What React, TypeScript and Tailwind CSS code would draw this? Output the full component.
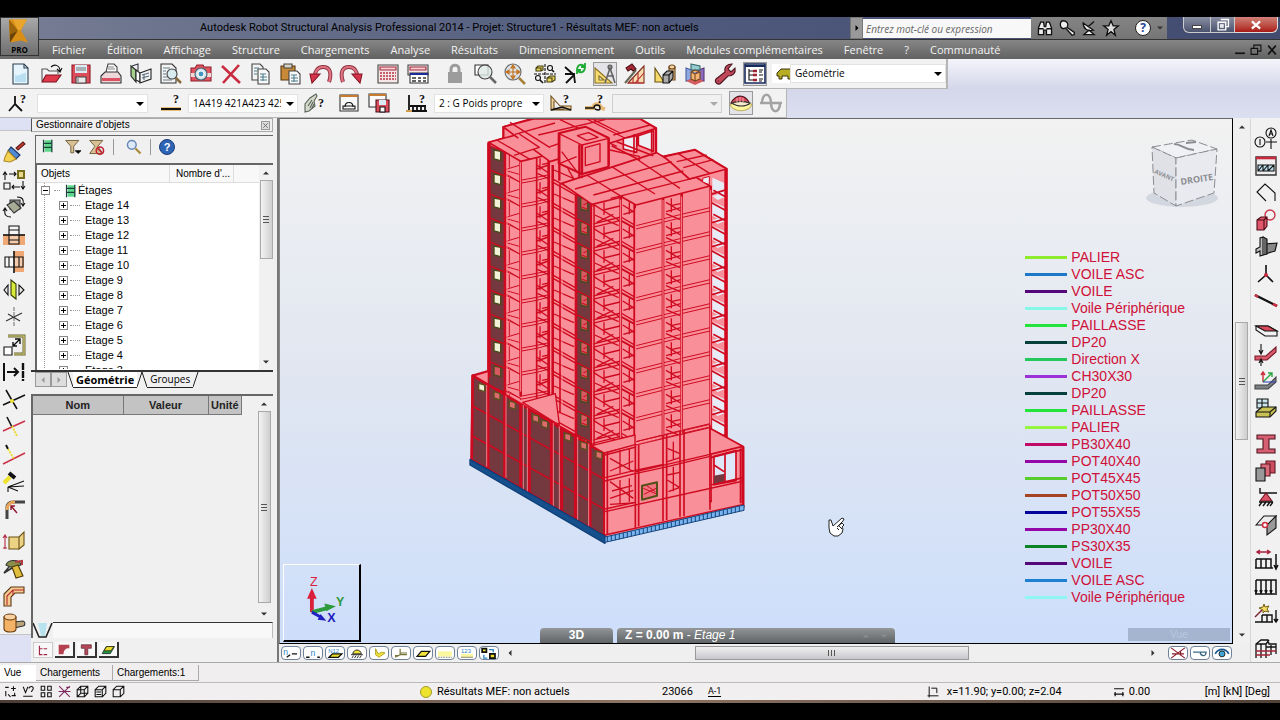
import type { ReactNode } from 'react';

type Tool = { label: string; art: ReactNode; on?: boolean };

const Ic = ({ children, size = 'h-[22px] w-[22px]' }: { children: ReactNode; size?: string }) => (
  <svg viewBox="0 0 22 22" className={`${size} block shrink-0 overflow-visible`} fill="none" stroke="#111" strokeWidth="1.1">
    {children}
  </svg>
);

const ToolButton = ({ tool }: { tool: Tool }) => (
  <button
    aria-label={tool.label}
    title={tool.label}
    className={tool.on ? 'bg-[#e4e4e8] outline outline-[#9a9a9a]' : ''}
  >
    <Ic>{tool.art}</Ic>
  </button>
);

const question = (
  <text x="13" y="11" fontSize="12" fontWeight="700" fontFamily="Liberation Serif, serif" fill="#111" stroke="none">
    ?
  </text>
);

const fileTools: Tool[] = [
  {
    label: 'Nouveau',
    art: <><path d="M3 1h11l4 4v16H3z" fill="#e6f5fd" stroke="#2c4050" /><path d="M5 12c5 2 8-3 11-2v9H5z" fill="#b9dff3" stroke="none" /><path d="M14 1v4h4" stroke="#2c4050" /></>,
  },
  {
    label: 'Ouvrir',
    art: (
      <>
        <path d="M2 18V6h5l2 2h9v3" fill="#f4f4f4" stroke="#555" />
        <path d="M2 19l4-7h15l-5 7z" fill="#e03a4a" stroke="#7a1220" />
        <path d="M11 4c4-4 9-1 9 4m-3-2l3 3 2-4" />
      </>
    ),
  },
  {
    label: 'Enregistrer',
    art: (
      <>
        <path d="M2 2h18v18H2z" fill="#dd4c5b" stroke="#8c1826" />
        <path d="M5 2h12v8H5z" fill="#d9ecf4" stroke="none" />
        <path d="M6 14h10v6H6z" fill="#e9e9e9" stroke="#444" />
        <path d="M8 15v4M6 5h10M6 7h10" stroke="#777" />
      </>
    ),
  },
  {
    label: 'Imprimer',
    art: (
      <>
        <path d="M6 9l2-8h6l3 3v6" fill="#fff" stroke="#444" />
        <path d="M1 13l4-4h13l3 4v7H1z" fill="#ecd8da" stroke="#333" />
        <path d="M2 15h18v3H2z" fill="#dc5060" stroke="none" />
        <path d="M8 4h6M8 6h7" stroke="#888" />
      </>
    ),
  },
  {
    label: 'Composer la note',
    art: (
      <>
        <path d="M1 3l5 4v12L1 13z" fill="#a4cf8c" stroke="#222" />
        <path d="M6 7l4 3v9l-4-2z" fill="#fff" stroke="#222" />
        <path d="M10 10l11-4v10l-11 4z" fill="#f1f3f4" stroke="#222" />
        <path d="M12 12l7-2m-7 5l7-2M14 11v6" stroke="#567" />
        <path d="M2 3l6-2v7" stroke="#334" />
      </>
    ),
  },
  {
    label: 'Aperçu avant impression',
    art: (
      <>
        <path d="M1 1h11l4 4v15H1z" fill="#f3f3f3" stroke="#333" />
        <path d="M3 5h7M3 8h3M3 11h3M3 14h5M3 17h9" stroke="#68808c" />
        <circle cx="12" cy="11" r="5" fill="#d8ecef" stroke="#444" />
        <path d="M16 15l5 5" stroke="#8b6b3c" strokeWidth="2.5" />
      </>
    ),
  },
  {
    label: 'Capture d’écran',
    art: (
      <>
        <path d="M1 5h4l2-3h6l1 2h7v14H1z" fill="#e25460" stroke="#8f1f2d" />
        <path d="M1 10h20v4H1z" fill="#efd9da" stroke="none" />
        <circle cx="11" cy="11" r="6" fill="#cfe2ea" stroke="#47606e" />
        <circle cx="11" cy="11" r="3" fill="#4494bd" stroke="#fff" />
      </>
    ),
  },
  { label: 'Supprimer', art: <path d="M2 3l18 17M19 2L3 20" stroke="#c92c40" strokeWidth="2.6" /> },
  {
    label: 'Copier',
    art: (
      <>
        <path d="M2 1h8l3 3v13H2z" fill="#f4f4f4" stroke="#444" />
        <path d="M8 6h8l3 3v12H8z" fill="#f8f8f8" stroke="#444" />
        <path d="M4 5h5M4 8h3M4 11h3M10 11h6M10 14h7M10 17h7M13 11v7" stroke="#4d7d8b" />
      </>
    ),
  },
  {
    label: 'Coller',
    art: (
      <>
        <path d="M1 3h14v14H1z" fill="#c88a38" stroke="#573a12" />
        <path d="M4 1h8v4H4z" fill="#d9d3c5" stroke="#444" />
        <path d="M9 8h8l3 3v10H9z" fill="#f8f8f8" stroke="#444" />
        <path d="M11 12h6M11 15h7M11 18h7M14 12v7" stroke="#4d7d8b" />
      </>
    ),
  },
  {
    label: 'Annuler',
    art: (
      <>
        <path d="M19 19c3-9 1-15-6-15-5 0-8 4-8 9" stroke="#8c3441" strokeWidth="4" />
        <path d="M19 19c3-9 1-15-6-15-5 0-8 4-8 9" stroke="#e07484" strokeWidth="2.2" />
        <path d="M0 11h10l-8 9z" fill="#d8334a" stroke="#861426" />
      </>
    ),
  },
  {
    label: 'Rétablir',
    art: (
      <>
        <path d="M3 19C0 10 2 4 9 4c5 0 8 4 8 9" stroke="#8c3441" strokeWidth="4" />
        <path d="M3 19C0 10 2 4 9 4c5 0 8 4 8 9" stroke="#e07484" strokeWidth="2.2" />
        <path d="M22 11H12l8 9z" fill="#d8334a" stroke="#861426" />
      </>
    ),
  },
];

const calcTools: Tool[] = [
  {
    label: 'Calculer',
    art: (
      <>
        <path d="M1 2h20v18H1z" fill="#f7e6e7" stroke="#444" />
        <path d="M3 4h16v3H3z" fill="#f7cfd2" stroke="#a12b3c" />
        <path d="M3 10h16M3 13h16M3 16h16" stroke="#c4606a" strokeWidth="1.8" strokeDasharray="2 1" />
      </>
    ),
  },
  {
    label: 'Tableaux',
    art: (
      <>
        <path d="M1 2h20v10H1z" fill="#f7e6e7" stroke="#444" />
        <path d="M3 4h16v3H3z" fill="#f7cfd2" stroke="#a12b3c" />
        <path d="M3 10h18v10H3z" fill="#fff" stroke="#333" />
        <path d="M3 11h18" stroke="#1c2c9a" strokeWidth="2" />
        <path d="M5 15h4M11 15h3M16 15h3M5 18h4M11 18h3M16 18h3" stroke="#333" strokeWidth="1.3" />
      </>
    ),
  },
];

const viewTools: Tool[] = [
  {
    label: 'Verrouiller',
    art: (
      <>
        <path d="M7 10V6c0-5 8-5 8 0v4" stroke="#9c9c9c" strokeWidth="3" />
        <path d="M4 9h14v11H4z" fill="#9c9c9c" stroke="none" />
      </>
    ),
  },
  {
    label: 'Zoom fenêtre',
    art: (
      <>
        <path d="M1 2h13v10H1z" fill="#fff" stroke="#333" />
        <circle cx="11" cy="9" r="7" fill="#dfe8e6" fillOpacity=".8" stroke="#444" />
        <path d="M16 14l6 6" stroke="#666" strokeWidth="2.5" />
      </>
    ),
  },
  {
    label: 'Zoom étendu',
    art: (
      <>
        <circle cx="9" cy="9" r="8" fill="#dbe3e6" stroke="#666" />
        <path d="M15 15l6 6" stroke="#a78137" strokeWidth="2.5" />
        <path d="M9 2v14M2 9h14M9 2l-2 3h4zM9 16l-2-3h4zM2 9l3-2v4zM16 9l-3-2v4z" stroke="#c4701c" />
      </>
    ),
  },
  {
    label: 'Affichage',
    art: (
      <>
        <path d="M0 11h22M11 1v20" strokeDasharray="3 1" />
        <path d="M2 8V5l2-2h5v4L7 8zM2 5h5v3M13 19v-4l3-2h5v4l-3 2zM13 15h5v4" fill="#e8d35c" stroke="#3f3b12" />
        <circle cx="16" cy="5" r="2.5" />
        <circle cx="4" cy="15" r="2.5" />
        <path d="M18 7l2 2M6 17l3 3" strokeWidth="1.6" />
      </>
    ),
  },
  {
    label: 'Redessiner',
    art: (
      <>
        <path d="M1 4l9 8v0M10 12l-8 8M10 12l1 8M1 11h10" strokeWidth="1.8" />
        <path d="M13 6c1-5 5-5 7-3m1 2c-1 5-5 5-7 3M21 0v4h-4M13 11V7h4" stroke="#1eaa35" strokeWidth="1.8" />
      </>
    ),
  },
  {
    label: 'Mode graphique',
    on: true,
    art: (
      <>
        <path d="M1 5v15h17zM5 13v4h5z" fill="#f7dc74" fillRule="evenodd" stroke="#8a7020" />
        <path d="M16 5l-5 15M16 5l5 15M13 13h7" stroke="#666" strokeWidth="1.6" />
        <circle cx="16" cy="4" r="2" fill="#888" stroke="#555" />
      </>
    ),
  },
  {
    label: 'Calcul de structure',
    art: (
      <>
        <path d="M4 20L20 3v17z" fill="#f8dcae" stroke="#7e3020" />
        <path d="M9 15v5M14 10v10M4 20h16M20 10l-9 10" stroke="#b9252e" />
        <path d="M1 20L12 7" stroke="#665" strokeWidth="2" />
        <path d="M2 5l6-4 4 5-3 2-2-2-3 2z" fill="#a82a36" stroke="#501018" />
      </>
    ),
  },
  {
    label: 'Sections',
    art: (
      <>
        <path d="M1 5v14h9z" fill="#f6da6c" stroke="#665010" />
        <path d="M15 4h6v13h-6z" fill="#ecc48c" stroke="#694318" />
        <ellipse cx="18" cy="4" rx="3" ry="2" fill="#f7d9a5" stroke="#694318" />
        <path d="M9 12l4-4h6v7l-4 5H9zM9 12h6v8m0-8l4-4" fill="#aaa" />
      </>
    ),
  },
  {
    label: 'Vue 3D',
    art: (
      <>
        <path d="M2 5l8 3v8l-8 2z" fill="#8fa8e0" stroke="#4a60a0" />
        <path d="M20 5l-8 3v8l8 2z" fill="#8d6cba" stroke="#553a80" />
        <path d="M7 1l9 2v4H7z" fill="#93cdd0" stroke="#37676a" />
        <path d="M2 18l9-4 9 4-9 4z" fill="#d45d60" stroke="none" />
        <path d="M7 9l4-2 5 2v7l-5 2-4-2zM7 9l4 2 5-2M11 11v7" fill="#f3b474" stroke="#73451a" />
      </>
    ),
  },
  {
    label: 'Outils',
    art: (
      <path
        d="M2 16l9-7c-1-5 2-8 7-8l-4 5 3 3 4-4c1 5-2 8-7 8l-7 7c-3 3-7-1-5-4zM4 18h1"
        fill="#c2485c"
        stroke="#4d1621"
      />
    ),
  },
  {
    label: 'Gestionnaire',
    on: true,
    art: (
      <>
        <path d="M1 1h20v19H1z" fill="#fff" stroke="#172a5c" strokeWidth="1.6" />
        <path d="M1 3h20" stroke="#172a5c" strokeWidth="2" />
        <path d="M5 6v11h4M5 8h4M5 12h4" />
        <path d="M9 8h4M9 12h4M9 17h4" stroke="#9e2330" strokeWidth="2.6" />
        <path d="M15 7h4M15 9h3M15 12h4M15 16h4M15 18h3" />
      </>
    ),
  },
];

const node: Tool = { label: 'Noeuds', art: <><path d="M8 4v8M8 12l7 7M8 12l-6 7" strokeWidth="1.8" />{question}</> };
const bar: Tool = {
  label: 'Barres',
  art: <><path d="M1 17h20" stroke="#e9c078" strokeWidth="4" /><path d="M1 17h20" strokeWidth="2" />{question}</>,
};
const pick: Tool = {
  label: 'Sélection spéciale',
  art: (
    <>
      <path d="M1 20V12l5-6 3-2 3-2 1 2-3 5 1 5-6 5z" fill="#d5dacc" stroke="#59635a" />
      <path d="M4 14l4-6M6 16l3-6M8 16l2-4" stroke="#59635a" />
      <text x="14" y="15" fontSize="12" fontWeight="700" fontFamily="Liberation Serif, serif" fill="#111" stroke="none">?</text>
    </>
  ),
};
const caseTools: Tool[] = [
  {
    label: 'Mode de sélection',
    art: (
      <>
        <path d="M2 3h18v16H2z" fill="#fafafa" stroke="#333" />
        <path d="M2 4h18" stroke="#c67b31" strokeWidth="2" />
        <path d="M7 15c0-6 8-6 8 0M5 17v-3h12v3z" />
      </>
    ),
  },
  {
    label: 'Enregistrer la sélection',
    art: (
      <>
        <path d="M1 2h17v13H1z" fill="#fafafa" stroke="#333" />
        <path d="M1 3h17" stroke="#c67b31" strokeWidth="2" />
        <path d="M8 8h13v12H8z" fill="#dd4c5b" stroke="#4e1018" />
        <path d="M11 8h7v5h-7z" fill="#d9ecf4" stroke="none" />
        <path d="M12 15h5v5h-5z" fill="#fff" />
      </>
    ),
  },
];
const caseTool: Tool = {
  label: 'Cas de charge',
  art: <><path d="M3 3v16M3 19h18M7 14v5M11 14v5M15 14v5M19 14v5M4 14h16" strokeWidth="1.8" /><path d="M0 19h6" stroke="#d09a46" strokeWidth="2" />{question}</>,
};
const modeTool: Tool = {
  label: 'Diagrammes',
  art: <><path d="M1 4l9 10h11v4H1zM4 9v8h10" fill="#ecd09a" stroke="#725021" /><path d="M1 18l11-3 9 3" strokeWidth="1.6" />{question}</>,
};
const defTool: Tool = {
  label: 'Déformée',
  art: <><path d="M1 16h8c0-5 8-5 8 0l4 1" stroke="#e6bc78" strokeWidth="4" /><path d="M1 16h9c0-4 6-4 6 0 0 3-3 2-5 1" strokeWidth="1.4" />{question}</>,
};
const resultTools: Tool[] = [
  {
    label: 'Cartographies',
    on: true,
    art: (
      <>
        <path d="M0 12c2 9 20 9 22 0z" fill="#fff7a0" stroke="#bdb35c" />
        <path d="M1 11c5-9 13-9 18-1l-8 3z" fill="#dc4a5c" stroke="#501820" />
        <path d="M2 11c5-2 12-2 18 0-4 4-13 4-18 0z" fill="#f6eccb" stroke="#333" />
        <path d="M7 6v4M10 5v5M13 6v4" stroke="#f3a0a8" />
      </>
    ),
  },
  {
    label: 'Analyse modale',
    art: <path d="M0 11h22M2 11c0-11 9-11 9 0s9 11 9 0" stroke="#a3a3a3" strokeWidth="2.5" />,
  },
];

const leftTools: Tool[] = [
  {
    label: 'Attributs',
    art: (
      <>
        <path d="M20 1l-7 6 2 2 7-6z" fill="#cb3b32" stroke="#602018" />
        <path d="M8 6l9 8-4 4-8-8z" fill="#4f8ad4" stroke="#1b3260" />
        <path d="M5 10l8 8-6 3-6-1 1-4z" fill="#f5d352" stroke="#b08c28" />
      </>
    ),
  },
  {
    label: 'Translation',
    art: (
      <>
        <path d="M15 2h6v7h-6z" fill="#e6dc8b" stroke="#776d20" strokeWidth="2" />
        <path d="M1 14h6v6H1zM2 11V4M0 6l2-3 2 3M6 5h7M11 3l2 2-2 2M20 12v7M18 17l2 3 2-3M17 18H9M11 16l-2 2 2 2" />
      </>
    ),
  },
  {
    label: 'Rotation',
    art: (
      <>
        <path d="M7 4h10v9H7z" fill="#888" stroke="#333" />
        <path d="M4 9l7-4 7 7-7 5z" fill="#a5ab94" stroke="#333" />
        <path d="M14 1c6 0 7 3 6 8m-2-2l2 3 2-3M8 21c-5 0-7-2-6-8m-2 2l2-3 2 3" />
      </>
    ),
  },
  {
    label: 'Symétrie horizontale',
    art: <><path d="M0 11h22v10H0z" fill="#f0a974" stroke="none" /><path d="M6 2h10v18H6zM6 6h10M6 16h10" fill="#fff" fillOpacity=".4" /><path d="M0 11h22" strokeWidth="1.6" /></>,
  },
  {
    label: 'Symétrie verticale',
    art: <><path d="M11 0h10v21H11z" fill="#f0a974" stroke="none" /><path d="M2 6h18v10H2zM6 6v10M16 6v10" fill="#fff" fillOpacity=".4" /><path d="M11 0v22" strokeWidth="1.6" /></>,
  },
  {
    label: 'Symétrie plan',
    art: <><path d="M8 1l5 4v15l-5-4z" fill="#d7ea38" stroke="#33380a" /><path d="M5 6l-4 5 4 5zM16 6v10l5-5z" fill="#e9e9e9" /></>,
  },
  { label: 'Symétrie axiale', art: <><path d="M11 1v20" stroke="#777" strokeDasharray="4 1" /><path d="M3 15L19 7M5 8l12 7" stroke="#333" /></> },
  {
    label: 'Échelle',
    art: <><path d="M5 2h16v18H11" stroke="#6f6a33" strokeWidth="3" /><path d="M5 2h16v18H11" stroke="#dcd386" /><path d="M1 13h8v8H1z" fill="#fff" /><path d="M10 12l7-7M12 5h5v5M10 8v4h4" strokeWidth="1.4" /></>,
  },
  { label: 'Décaler', art: <><path d="M1 2v18M4 11h11M11 7l4 4-4 4" strokeWidth="2" /><path d="M20 2v18" strokeWidth="2.4" strokeDasharray="7 1" /></> },
  { label: 'Intersection', art: <><path d="M3 1l11 19M0 16L22 6" strokeWidth="1.5" /><circle cx="9" cy="12" r="2" fill="#f2e738" stroke="none" /></> },
  { label: 'Couper', art: <><path d="M0 15L22 5" stroke="#cc3046" strokeWidth="1.5" /><path d="M4 1l5 10" strokeWidth="1.6" /><path d="M9 10l5 10" stroke="#eadb31" strokeWidth="2" strokeDasharray="2 1" /></> },
  { label: 'Prolonger', art: <><path d="M0 20L22 9" stroke="#cc3046" strokeWidth="1.5" /><path d="M3 1l2 4" strokeWidth="2" /><path d="M5 5l6 10" stroke="#eadb31" strokeWidth="2" strokeDasharray="2 1" /></> },
  { label: 'Diviser', art: <><path d="M1 12l6-6" stroke="#eee22a" strokeWidth="4" /><path d="M6 2l6 5" strokeWidth="4" /><path d="M5 16l16-6M5 16l16-1M5 16l10 4M5 16v5" /></> },
  { label: 'Congé', art: <><path d="M4 20V9c0-4 2-6 6-6h12" stroke="#444" strokeWidth="3" /><path d="M4 11c0-5 2-8 8-8" stroke="#e8a55c" strokeWidth="3" /><path d="M8 7l6 7M8 11V7h4" stroke="#8c1428" strokeWidth="1.4" /></> },
];

const leftObjects: Tool[] = [
  { label: 'Extruder', art: <><path d="M2 5v13M0 7l2-3 2 3M0 17h4" stroke="#b52943" /><path d="M6 6h10v12H6zM16 6l5-5v13l-5 4z" fill="#ecd283" stroke="#6b5115" /></> },
  { label: 'Révolution', art: <><path d="M3 7c2-6 14-6 15 0l-5 2H7z" fill="#8a8f4a" stroke="#333" /><path d="M9 9l4 11 7-2-5-11z" fill="#e0bd3c" stroke="#4d3a08" /><path d="M6 9l-5 6 8-5" stroke="#333" strokeWidth="1.6" /><path d="M12 4l7-1v4" stroke="#b03c42" strokeWidth="2" /></> },
  { label: 'Extrusion par polyligne', art: <><path d="M1 21V9l7-7h13v6h-9l-4 4v9z" fill="#f6cb92" stroke="#5b3814" /><path d="M4 20V11l6-6h11M10 5v5" stroke="#b52a2a" /></> },
  { label: 'Solides', art: <><path d="M11 10l9-1c3 1 2 5 0 5l-9 2z" fill="#bda67c" stroke="#333" /><path d="M1 5v12c1 4 12 4 12 0V5z" fill="#f4b267" stroke="#6a3e12" /><ellipse cx="7" cy="5" rx="6" ry="3" fill="#f9d1a0" stroke="#6a3e12" /></> },
];

const load = <path d="M1 10h15v9M1 10v9M6 10v9M11 10v9M0 19h18M21 5v14M19 16l2 4 2-4" strokeWidth="1.5" />;

const rightTools: Tool[][] = [
  [
    { label: 'Lignes de construction', art: <><circle cx="16" cy="5" r="5" /><circle cx="5" cy="14" r="5" /><path d="M16 11v10M11 14h11M14 8l2-6 2 6M15 6h3M5 11v6" /></> },
    { label: 'Niveaux', art: <><path d="M1 2h20v18H1z" fill="#eee" stroke="#333" strokeWidth="1.4" /><path d="M1 3h20" stroke="#ca2a3d" strokeWidth="2.6" /><path d="M3 10h16v6H3zM8 10v6M13 10v6M3 16l5-6M8 16l5-6M13 16l6-6" fill="#bcddeb" /></> },
    { label: 'Polyligne', art: <path d="M11 19L2 10l8-8 10 9v8" /> },
    { label: 'Objets', art: <><circle cx="15" cy="6" r="5" stroke="#cb354a" strokeWidth="1.4" /><path d="M2 11l4-3h6v9l-3 4H2zM2 11h7v10m0-10l3-3" fill="#e0566a" stroke="#4c0d17" /></> },
    { label: 'Profilés', art: <><path d="M10 8l12-1-2 8-10 3z" fill="#888" /><path d="M1 13l4-2V2l3-1v18l-3 1v-5l-4 2z" fill="#bbb" /><path d="M8 1l4 2v15l-4 1" fill="#666" /></> },
    { label: 'Noeud', art: <><path d="M11 2v10M11 12l7 7M11 12l-8 7" strokeWidth="1.6" /><circle cx="11" cy="12" r="2" fill="#c82b40" stroke="none" /></> },
    { label: 'Barre', art: <><path d="M0 5l22 11" strokeWidth="2.2" /><path d="M0 5l3 2M18 14l4 2" stroke="#cf2f42" strokeWidth="2.6" /></> },
    { label: 'Dalle', art: <><path d="M1 9h12l9 5v5H10L1 13z" fill="#f1f1f1" /><path d="M1 9h12l9 5H10z" fill="#d8485a" /></> },
    { label: 'Appui plan', art: <><path d="M0 12h11l10-9v5L12 16H0z" fill="#d85a6c" stroke="#771827" /><path d="M6 0v9M4 6l2 4 2-4M6 22v-6M4 19l2-4 2 4" /></> },
    { label: 'Repère local', art: <><path d="M0 14h13l8-8v5l-8 7H0z" fill="#7a8083" stroke="#444" /><path d="M8 11V1M6 4l2-3 2 3" stroke="#cb2e3c" strokeWidth="1.4" /><path d="M8 11l9-9M13 2h4v4" stroke="#28a540" strokeWidth="1.4" /><path d="M8 11h13" stroke="#3a45bd" /></> },
    { label: 'Maillage', art: <><path d="M2 1h11v9H2zM7 1v9M2 5h11" fill="#cbe6ed" /><path d="M1 14l6-5h14v4l-6 6H1z" fill="#c9c154" /><path d="M1 14h14l6-5M15 14v5" /></> },
  ],
  [
    { label: 'Profilé', art: <path d="M2 2h18v4h-6v10h6v4H2v-4h6V6H2z" fill="#d65e72" stroke="#4f131d" /> },
    { label: 'Matériaux', art: <><path d="M11 1h9v12h-9z" fill="#ce4c60" stroke="#5c1824" /><path d="M6 4h9v12H6z" fill="#d96878" stroke="#5c1824" /><path d="M1 8h9v13H1z" fill="#999" /></> },
    { label: 'Appuis', art: <><path d="M5 1v5h17" strokeWidth="1.4" /><path d="M11 6l6 8H5z" fill="#dd5266" stroke="#6e1523" /><path d="M4 15h14M7 15l-3 4M11 15l-3 4M15 15l-3 4M18 15l-3 4" strokeWidth="1.4" /></> },
    { label: 'Relâchements', art: <><path d="M1 11l8-9h12l-8 9z" fill="#ececec" /><path d="M21 2v12l-9 7V11z" fill="#999" /><circle cx="10" cy="11" r="2.5" fill="#fff" stroke="#cf2f42" strokeWidth="1.6" /></> },
  ],
  [
    { label: 'Cas de charges', art: <>{load}<path d="M2 3h13M5 1L2 3l3 2M12 1l3 2-3 2" stroke="#a71f3b" strokeWidth="1.5" /></> },
    { label: 'Charges', art: <path d="M1 4h20v13M1 4v13M6 4v13M11 4v13M16 4v13M0 18h22M0 14l1 3 1-3M5 14l1 3 1-3M10 14l1 3 1-3M15 14l1 3 1-3" strokeWidth="1.5" /> },
    { label: 'Charges spéciales', art: <><path d="M7 12h10v7M7 12v7M12 12v7M0 19h18M21 7v12M19 16l2 3 2-3" strokeWidth="1.4" /><path d="M0 14l7-7" stroke="#7a2430" strokeWidth="1.4" /><path d="M9 1l1 3 4-1-2 3 2 3-4-1-2 2V7L4 5l4-1z" fill="#f4de63" stroke="#775e14" strokeWidth="1" /></> },
  ],
  [
    { label: 'Structure type', art: <><path d="M1 20V6l5-4h7l1 4h7v10M1 6h10v14M11 6l3-4M6 6v14M11 9h10M16 7v10" strokeWidth="1.3" /><path d="M1 13h20M1 17h14" stroke="#a7243a" strokeWidth="1.3" /></> },
  ],
];

const menus = ['Fichier', 'Édition', 'Affichage', 'Structure', 'Chargements', 'Analyse', 'Résultats', 'Dimensionnement', 'Outils', 'Modules complémentaires', 'Fenêtre', '?', 'Communauté'];

const legend = [
  { name: 'PALIER', color: '#8eec2c' },
  { name: 'VOILE ASC', color: '#1e78c8' },
  { name: 'VOILE', color: '#54087a' },
  { name: 'Voile Périphérique', color: '#86f8e8' },
  { name: 'PAILLASSE', color: '#22e43a' },
  { name: 'DP20', color: '#06403c' },
  { name: 'Direction X', color: '#22c85c' },
  { name: 'CH30X30', color: '#9a32d8' },
  { name: 'DP20', color: '#06403c' },
  { name: 'PAILLASSE', color: '#22e43a' },
  { name: 'PALIER', color: '#96f540' },
  { name: 'PB30X40', color: '#c00a68' },
  { name: 'POT40X40', color: '#9408aa' },
  { name: 'POT45X45', color: '#56cc2e' },
  { name: 'POT50X50', color: '#a44420' },
  { name: 'POT55X55', color: '#04049c' },
  { name: 'PP30X40', color: '#9408aa' },
  { name: 'PS30X35', color: '#0a8424' },
  { name: 'VOILE', color: '#54087a' },
  { name: 'VOILE ASC', color: '#1e80d0' },
  { name: 'Voile Périphérique', color: '#90f6f4' },
];

const Combo = ({ label, value, width, disabled }: { label: string; value: string; width: string; disabled?: boolean }) => (
  <div className={`relative ${width}`}>
    <select
      aria-label={label}
      disabled={disabled}
      className={`block h-[19px] w-full appearance-none border pr-4 pl-1 font-['Open_Sans',sans-serif] text-[10px] leading-[17px] ${
        disabled ? 'border-[#cfcfcf] bg-[#f1f1f1]' : 'border-[#e2e2e2] bg-white text-black'
      }`}
    >
      <option>{value}</option>
    </select>
    <svg viewBox="0 0 8 4" className="pointer-events-none absolute top-2 right-1 h-1 w-2">
      <path d="M0 0h8L4 4z" fill={disabled ? '#aaa' : '#000'} />
    </svg>
  </div>
);

const Arrow = ({ dir, color = '#333' }: { dir: 'up' | 'down' | 'left' | 'right'; color?: string }) => {
  const d = { up: 'M0 6l4-4 4 4z', down: 'M0 2l4 4 4-4z', left: 'M6 0L2 4l4 4z', right: 'M2 0l4 4-4 4z' }[dir];
  return (
    <svg viewBox="0 0 8 8" className="block h-1.5 w-1.5 shrink-0">
      <path d={d} fill={color} />
    </svg>
  );
};

const TitleBar = () => (
  <header className="flex h-[42px] bg-[#6c6c6c]">
    <button aria-label="Menu de l’application" className="flex h-[39px] w-[39px] shrink-0 flex-col items-center border border-[#333] bg-linear-to-b from-[#a9a9a9] to-[#6f6f6f]">
      <svg viewBox="0 0 24 26" className="h-[27px] w-6">
        <path d="M1 1h18l-6 11 7 12-7-2-11 2z" fill="#d98e16" />
        <path d="M1 1l9 11-8 12z" fill="#9a630c" />
        <path d="M5 1h14l-6 10-3 1z" fill="#eaa52c" />
        <path d="M2 16l7-3-7 11z" fill="#6d4408" />
      </svg>
      <span className="font-['Open_Sans',sans-serif] text-[8px] leading-[9px] font-bold">PRO</span>
    </button>
    <div className="flex min-w-0 flex-1 flex-col">
      <div className="flex h-[22px] bg-linear-to-r from-[#747b92] via-[#4f5a7c] to-[#424b70]">
        <h1 className="min-w-0 flex-1 truncate pl-[161px] font-['Roboto',sans-serif] text-[11px] leading-[22px] text-black">
          Autodesk Robot Structural Analysis Professional 2014 - Projet: Structure1 - Résultats MEF: non actuels
        </h1>
        <button aria-label="Développer" className="flex w-[13px] items-center justify-center border border-[#777] bg-[#999]">
          <Arrow dir="right" color="#000" />
        </button>
        <input
          aria-label="Recherche"
          placeholder="Entrez mot-clé ou expression"
          className="mt-0.5 h-[19px] w-[168px] bg-[#f8f8f8] px-[3px] font-['Open_Sans',sans-serif] text-[10px] italic placeholder:text-[#666]"
        />
        <div className="flex w-[136px] items-center gap-1.5 bg-linear-to-b from-[#858585] to-[#757575] pl-1.5">
          <button aria-label="Rechercher">
            <Ic size="h-4 w-4"><path d="M2 20V11l3-8h4l1 6h2l1-6h4l3 8v9h-7v-6h-4v6zM2 12h7M13 12h7" fill="#eee" stroke="#111" strokeWidth="1.8" /></Ic>
          </button>
          <button aria-label="Abonnement">
            <Ic size="h-4 w-4"><path d="M11 10c3-4 0-9-5-9S0 10 6 12l3-1 9 10 3-1v-3z" fill="#eee" stroke="#111" strokeWidth="1.8" /></Ic>
          </button>
          <button aria-label="Communication">
            <Ic size="h-4 w-4"><path d="M3 4c0 8 6 12 14 10zM10 9l8-7M4 20h14l-7-6z" fill="#eee" stroke="#111" strokeWidth="1.8" /></Ic>
          </button>
          <button aria-label="Favoris">
            <Ic size="h-4 w-4"><path d="M11 1l3 7h7l-6 5 2 8-6-5-6 5 2-8-6-5h7z" fill="#ddd" stroke="#111" strokeWidth="1.8" /></Ic>
          </button>
          <button aria-label="Aide" className="ml-2.5 h-4 w-4 shrink-0 rounded-full border border-[#222] bg-white font-['Open_Sans',sans-serif] text-[12px] leading-[14px] font-bold text-[#24459a]">
            ?
          </button>
          <Arrow dir="down" />
        </div>
        <div className="flex h-4 w-[113px] justify-end pr-0.5 pl-4">
          <button aria-label="Réduire" className="flex w-7 items-center justify-center rounded-bl-md border border-t-0 border-[#ccc] bg-linear-to-b from-[#8a8fa3] to-[#4b536f]">
            <span className="mt-1 h-1 w-2.5 border border-[#444] bg-white" />
          </button>
          <button aria-label="Restaurer" className="flex w-6 items-center justify-center border border-t-0 border-l-0 border-[#ccc] bg-linear-to-b from-[#8a8fa3] to-[#4b536f]">
            <Ic size="h-3 w-3"><path d="M7 1h14v13h-5M2 6h14v14H2zM7 11h4v4H7z" stroke="#fff" strokeWidth="2.5" /></Ic>
          </button>
          <button aria-label="Fermer" className="flex flex-1 items-center justify-center rounded-br-md border border-t-0 border-l-0 border-[#ddd] bg-linear-to-b from-[#d08078] to-[#a81414]">
            <Ic size="h-2.5 w-2.5"><path d="M2 3l18 16M20 3L2 19" stroke="#fff" strokeWidth="5" /></Ic>
          </button>
        </div>
      </div>
      <nav className="flex h-5 items-center border-t border-[#333] bg-linear-to-b from-[#868686] to-[#626262] pl-[13px] font-['Open_Sans',sans-serif] text-[11px] text-[#f2f2f2]">
        <ul className="flex flex-1 gap-[21px]">
          {menus.map((menu) => (
            <li key={menu}>
              <button className="block leading-[18px]">{menu}</button>
            </li>
          ))}
        </ul>
        <div className="flex gap-1 pr-0.5">
          <Ic size="h-3 w-3"><path d="M2 17h18" strokeWidth="3" /></Ic>
          <Ic size="h-3 w-3"><path d="M7 8V2h13v11h-6M2 8h12v11H2z" strokeWidth="2" /></Ic>
          <Ic size="h-3 w-3"><path d="M4 3l14 16M18 3L4 19" strokeWidth="3" /></Ic>
        </div>
      </nav>
    </div>
  </header>
);

const Toolbars = () => (
  <div className="bg-linear-to-b from-[#f4f4fa] via-[#d4d7ea] to-[#dcdff0]">
    <div className="flex h-[30px] w-fit items-center border-r-2 border-b border-[#b5b5b5] bg-[#f2f2f2]">
      <div className="flex items-center gap-[15px] pl-[10px]">
        <div className="flex gap-2">{fileTools.map((t) => <ToolButton key={t.label} tool={t} />)}</div>
        <div className="flex gap-2">{calcTools.map((t) => <ToolButton key={t.label} tool={t} />)}</div>
        <div className="flex gap-2">{viewTools.map((t) => <ToolButton key={t.label} tool={t} />)}</div>
      </div>
      <div className="ml-1.5 flex items-center bg-white">
        <svg viewBox="0 0 18 12" className="ml-1 h-3 w-[18px]">
          <path d="M1 5l4-4h12v7h-2v3h-3V8H6v3H3V8H1z" fill="#b6ad24" stroke="#3a370d" />
        </svg>
        <Combo label="Attitude" value="Géométrie" width="w-[156px] -ml-1" />
      </div>
    </div>
    <div className="flex h-[29px] w-fit items-center border-r border-b border-[#b5b5b5] bg-[#f2f2f2] pr-1 pl-[7px]">
      <div className="flex items-center gap-2">
        <ToolButton tool={node} />
        <Combo label="Sélection de noeuds" value="" width="w-[111px]" />
      </div>
      <div className="ml-3 flex items-center gap-1.5">
        <ToolButton tool={bar} />
        <Combo label="Sélection de barres" value="1A419 421A423 425" width="w-[110px]" />
        <ToolButton tool={pick} />
      </div>
      <div className="ml-3 flex gap-2">{caseTools.map((t) => <ToolButton key={t.label} tool={t} />)}</div>
      <div className="ml-4 flex items-center gap-1.5">
        <ToolButton tool={caseTool} />
        <Combo label="Cas" value="2 : G Poids propre" width="w-[110px]" />
        <ToolButton tool={modeTool} />
      </div>
      <div className="ml-3 flex items-center gap-1.5">
        <ToolButton tool={defTool} />
        <Combo label="Mode" value="" width="w-[110px]" disabled />
      </div>
      <div className="ml-2 flex gap-2">{resultTools.map((t) => <ToolButton key={t.label} tool={t} />)}</div>
    </div>
  </div>
);

const LeftTools = () => (
  <aside className="flex w-[31px] shrink-0 flex-col bg-[#dde1f3] pt-3 pb-[27px]">
    <div className="flex flex-1 flex-col border-y border-[#c4c4c4] bg-[#f1f1f1] px-[3px] pt-2.5">
      <div className="flex flex-1 flex-col justify-between">{leftTools.map((t) => <ToolButton key={t.label} tool={t} />)}</div>
      <div className="mt-2.5 flex flex-col gap-[5px]">{leftObjects.map((t) => <ToolButton key={t.label} tool={t} />)}</div>
    </div>
  </aside>
);

const storeyIcon = (
  <Ic size="h-3.5 w-3.5">
    <path d="M6 2h11v18H6z" fill="#5cd88a" stroke="none" />
    <path d="M4 1v20M17 1v20M5 7h12M5 13h12" stroke="#1c3f3a" strokeWidth="2" />
  </Ic>
);

const Grip = ({ vertical }: { vertical?: boolean }) => (
  <span className={vertical ? 'flex h-1.5 gap-[2px]' : 'flex w-1.5 flex-col gap-[2px]'}>
    {[0, 1, 2].map((i) => (
      <i key={i} className={vertical ? 'h-full w-px bg-[#555]' : 'h-px w-full bg-[#555]'} />
    ))}
  </span>
);

const thumb = 'flex items-center justify-center border border-[#a9a9a9] bg-linear-to-r from-[#f3f3f3] to-[#cfcfcf]';
const storeys = ['14', '13', '12', '11', '10', '9', '8', '7', '6', '5', '4', '3'];

const ObjectPanel = () => (
  <section className="flex w-[248px] shrink-0 flex-col border-r-2 border-[#777] bg-[#f0f0f0] pr-1 font-['Liberation_Sans',sans-serif] text-[11px] text-black">
    <div className="flex h-3.5 items-center justify-between border border-[#aaa] border-l-[#555] pl-1 text-[10px]">
      <h2 className="leading-3">Gestionnaire d'objets</h2>
      <button aria-label="Fermer le gestionnaire" className="mr-0.5 flex h-[9px] w-[9px] items-center justify-center border border-[#999] bg-[#ddd]">
        <Ic size="h-[5px] w-[5px]"><path d="M1 1l20 20M21 1L1 21" stroke="#666" strokeWidth="4" /></Ic>
      </button>
    </div>
    <div className="mt-[3px] ml-1 flex h-7 items-start gap-2 border-t border-l border-[#666] pt-[3px] pl-[5px]">
      <button aria-label="Étages">{storeyIcon}</button>
      <button aria-label="Filtre" className="ml-0.5">
        <Ic size="h-4 w-4"><path d="M1 2h18l-7 8v9H8v-9z" fill="#d8c193" stroke="#5b4a24" /><path d="M14 16h8l-4 4z" fill="#000" /></Ic>
      </button>
      <button aria-label="Désactiver le filtre">
        <Ic size="h-4 w-4"><path d="M1 2h18l-7 8 7 10H1l7-10z" fill="#d8c193" stroke="#5b4a24" /><circle cx="15" cy="16" r="5" stroke="#c2202e" strokeWidth="2.2" /><path d="M12 13l6 6" stroke="#c2202e" strokeWidth="2" /></Ic>
      </button>
      <i className="h-4 w-px bg-[#999]" />
      <button aria-label="Rechercher un objet" className="ml-1">
        <Ic size="h-4 w-4"><circle cx="8" cy="8" r="6" fill="#dbe9f9" stroke="#6a86b4" strokeWidth="2" /><path d="M13 13l7 7" stroke="#a98a3b" strokeWidth="3" /></Ic>
      </button>
      <i className="h-4 w-px bg-[#999]" />
      <button aria-label="Aide" className="h-4 w-4 rounded-full border border-[#1c3c77] bg-[#2e64b4] text-[11px] leading-[14px] font-bold text-white">
        ?
      </button>
    </div>
    <div className="ml-1 flex h-[207px] border-t-2 border-l-2 border-[#666] bg-white">
      <div className="mb-px flex min-w-0 flex-1 flex-col overflow-hidden">
        <div className="flex h-[18px] shrink-0 border-b border-[#ddd] bg-[#f8f8f8] text-[10px] leading-[17px]">
          <span className="w-[133px] border-r border-[#ddd] pl-1">Objets</span>
          <span className="w-16 border-r border-[#ddd] pl-1.5">Nombre d'...</span>
        </div>
        <ul className="ml-[7px] border-l border-dotted border-[#999]">
          <li>
            <div className="-ml-1 flex h-[15px] items-center">
              <button aria-label="Réduire Étages" className="flex h-[9px] w-[9px] items-center justify-center border border-[#888] bg-white">
                <i className="h-px w-[5px] bg-black" />
              </button>
              <i className="mr-1 ml-1 w-1.5 border-t border-dotted border-[#999]" />
              <button className="flex items-center text-[11px]">
                {storeyIcon}
                {/* heading sits left of the storey names */}
                <span>Étages</span>
              </button>
            </div>
            <ul className="ml-[14px]">
              {storeys.map((n) => (
                <li key={n} className="flex h-[15px] items-center">
                  <button aria-label={`Développer Etage ${n}`} className="grid h-[9px] w-[9px] place-items-center border border-[#888] bg-white">
                    <i className="col-start-1 row-start-1 h-px w-[5px] bg-black" />
                    <i className="col-start-1 row-start-1 h-[5px] w-px bg-black" />
                  </button>
                  <i className="mr-[5px] ml-0.5 w-2.5 border-t border-dotted border-[#999]" />
                  <button className="text-[11px] leading-[15px]">Etage {n}</button>
                </li>
              ))}
            </ul>
          </li>
        </ul>
      </div>
      <div className="flex w-[14px] flex-col items-center bg-[#f1f1f1] py-[5px]">
        <Arrow dir="up" />
        <div className={`${thumb} mt-1 h-[79px] w-[13px]`}><Grip /></div>
        <div className="flex-1" />
        <Arrow dir="down" />
      </div>
    </div>
    <div className="flex h-[18px] items-start border-t-2 border-[#333] pl-1">
      <button aria-label="Onglet précédent" className="flex h-[15px] w-4 items-center justify-center border border-[#999] bg-[#ddd]"><Arrow dir="left" color="#999" /></button>
      <button aria-label="Onglet suivant" className="flex h-[15px] w-4 items-center justify-center border border-[#999] bg-[#ddd]"><Arrow dir="right" color="#999" /></button>
      <svg viewBox="0 0 6 16" className="h-4 w-1.5" stroke="#222" fill="none"><path d="M1 0l5 15" /></svg>
      <button className="border-b border-[#222] bg-white px-[3px] font-['Open_Sans',sans-serif] text-[11px] leading-[15px] font-bold">Géométrie</button>
      <svg viewBox="0 0 10 16" className="h-4 w-2.5" stroke="#222" fill="none"><path d="M0 15L5 0l5 15" /></svg>
      <button className="border-b border-[#222] px-[3px] font-['Open_Sans',sans-serif] text-[10px] leading-[15px]">Groupes</button>
      <svg viewBox="0 0 6 16" className="h-4 w-1.5" stroke="#222" fill="none"><path d="M0 15L5 0" /></svg>
    </div>
    <div className="mt-1.5 flex min-h-0 flex-1 border-t-2 border-l-2 border-[#666]">
      <div className="flex-1">
        <table className="w-[209px] table-fixed border-collapse text-[11px]">
          <thead>
            <tr className="h-[18px] bg-[#c3c3c3] text-[#222]">
              <th className="w-[90px] border-r border-b border-[#777]">Nom</th>
              <th className="w-[85px] border-r border-b border-[#777]">Valeur</th>
              <th className="border-r border-b border-[#777]">Unité</th>
            </tr>
          </thead>
        </table>
      </div>
      <div className="mr-0.5 flex w-[14px] flex-col items-center py-[5px]">
        <Arrow dir="up" />
        <div className={`${thumb} mt-1 mb-2 w-[13px] flex-1`}><Grip /></div>
        <Arrow dir="down" />
      </div>
    </div>
    <div className="flex h-4 border-l-2 border-[#666]">
      <svg viewBox="0 0 20 16" className="h-4 w-5"><path d="M5 1h9l-2 13H8z" fill="#b8e3ee" /><path d="M0 1l6 14h7L19 1" fill="none" stroke="#222" strokeWidth="1.6" /></svg>
      <div className="flex-1 border-t border-r border-[#333] border-r-[#bbb] bg-[#f8f8f8]" />
    </div>
    <div className="flex h-[24px] items-start gap-0.5 pt-1 pl-0.5">
      {[
        <path key="a" d="M5 3v15h5M5 8h5M12 8h6M12 18h6" stroke="#a22745" strokeWidth="2" />,
        <path key="b" d="M2 3h18v6c-7 0-9 3-10 10H2z" fill="#b5404f" stroke="none" />,
        <path key="c" d="M3 3h17v6h-6v11H9V9H3z" fill="#b5475a" stroke="#511a24" />,
        <g key="d"><path d="M1 18l7-12h14l-7 12z" fill="#239044" /><path d="M4 13l5-7h12l-5 7z" fill="#ecdc30" /></g>,
      ].map((art, i) => (
        <button key={i} aria-label={`Page ${i + 1}`} className={`flex h-4 w-5 items-center justify-center bg-[#f8f8f8] ${i ? 'border-r-2 border-b-2 border-[#333]' : 'border border-[#ccc]'}`}>
          <Ic size="h-[13px] w-4">{art}</Ic>
        </button>
      ))}
    </div>
  </section>
);

const RED = '#cf0a20';
const PINK = '#f98f98';
const DARK = '#74383f';

// the tower model: one storey is 72 units high, drawn bottom storey first
const Tower = () => {
  const levels = Array.from({ length: 11 }, (_, i) => 10 - i);
  return (
    <svg viewBox="0 12 900 1293" className="absolute top-0 left-[180px] h-[431px] w-[300px]" fill="none" stroke={RED} strokeWidth="5" strokeLinejoin="round">
      <path d="M38 782l47-14V85l45-15V36l85-24h325l48 28v78l22 7 95-20 95 57v810l50 24v180l-415 94L35 1035z" fill={PINK} strokeWidth="7" />
      {levels.map((i) => {
        const y = i * 72;
        return (
          <g key={i}>
            <path d={`M757 ${188 + y}l36 16v46l-36-20z`} fill="#e6ebf5" stroke="none" />
            <path d={`M757 ${243 + y}l36-10v14l-20 8z`} fill="#e6ebf5" stroke="none" />
            <path d={`M752 ${i ? 252 + y : 238}l48-14M752 ${262 + y}l48 26M760 ${226 + y}l38 20`} />
            <path d={`M85 ${90 + y}l50 22v72l-50-22z`} fill={DARK} strokeWidth="4" />
            <path d={`M102 ${105 + y}l20 4v28l-20-5z`} fill={i > 8 ? '#d75a62' : '#f0f2d8'} stroke="#4b4a1a" strokeWidth="4" />
            <path d={`M135 ${108 + y}l47 22M135 ${175 + y}l47 28M138 ${163 + y}l40-12M148 ${118 + y}v40M142 ${168 + y}l36 10`} strokeWidth="3" />
            <path d={`M180 ${205 + y}l50-9 45-12M180 ${196 + y}l50-9 38-8`} strokeWidth="3" />
            <path d={`M230 ${150 + y}l36 24M230 ${162 + y}l36-12M240 ${130 + y}v36M232 ${175 + y}l34 16M246 ${148 + y}l22-4`} strokeWidth="4" />
            <path d={`M275 ${190 + y}l75 42M275 ${200 + y}l75 42M282 ${165 + y}l60 26`} strokeWidth="4" />
            <path d={`M348 ${238 + y}l46 23v72l-46-23z`} fill={DARK} strokeWidth="4" />
            <path d={`M362 ${248 + y}l21 8v32l-21-6z`} fill="#d75a62" stroke="#4b4a1a" strokeWidth="4" />
            <path d={`M370 ${270 + y}l12-6M364 ${276 + y}l18 6`} strokeWidth="3" />
            <path d={`M395 ${338 + y}l88-22M395 ${328 + y}l88-22M400 ${268 + y}l80 50M432 ${262 + y}v38M404 ${300 + y}l72 32M430 ${285 + y}l50-12M410 ${322 + y}l50-24`} strokeWidth="4" />
            <path d={`M483 ${244 + y}l44 24M483 ${306 + y}l44 26M483 ${318 + y}l44 24M490 ${298 + y}l34-10M508 ${262 + y}v36M488 ${270 + y}l36 22`} strokeWidth="4" />
            <path d={`M528 ${342 + y}l80-20 56-14 86-20M528 ${332 + y}l80-20 56-14 86-20`} strokeWidth="3" />
            <path d={`M618 ${262 + y}l44 26M618 ${290 + y}l44-12M634 ${250 + y}v42M618 ${296 + y}l42 18M632 ${272 + y}l30-6`} strokeWidth="4" />
          </g>
        );
      })}
      <g strokeWidth="8">
        <path d="M88 86v700M135 108v730M182 134v710M266 122v760M278 150v742" />
        <path d="M348 238v730M394 262v730M482 248v750M524 268v760M609 248v940M665 235v950M752 212v950M797 165v810" />
        <path d="M300 205v690M230 128v750M402 268v730" strokeWidth="5" />
      </g>
      <g stroke={PINK} strokeWidth="3">
        <path d="M182 140v690M272 130v750M398 275v710M482 254v730M527 280v900M609 255v930M665 245v930M752 225v930M141 118v710M306 220v670" />
      </g>
      {/* roofs */}
      <g fill={PINK}>
        <path d="M85 82l93-25 97 60-93 22z" />
        <path d="M130 36l90-24h320l48 28-118 38-200 62z" />
        <path d="M305 205l285-92 160 100-222 57-42-24-90 22z" />
        <path d="M612 125l93-20 95 57-112 30z" />
        <path d="M110 75l100 58M178 57l60 40-76 24M150 22l120 76M300 14l170 80M380 12l120 60M235 60l200-46M165 58l120-34M270 95l60-20M460 60l110-30M400 14l80 40M450 105l90 20" strokeWidth="4" />
        <path d="M380 180l110 68M455 155l130 82M530 132l130 88M345 222l290-82M400 240l270-72M452 250l255-62M650 140l90-20M670 158l90-24M655 116l95 60" strokeWidth="4" />
        <path d="M490 70l40-8v50l-40-10zM535 62l45-15v62l-45-18z" fill="#eceff4" />
        <path d="M522 58v58M575 45v68M455 92l85 44M470 80l110 42" />
        <path d="M728 190l20-6v25l-20-8z" fill="#eceff4" strokeWidth="3" />
      </g>
      {/* lift shaft above the roof */}
      <g>
        <path d="M296 55l80-20 70 34v86l-80 22-70-32z" fill={PINK} strokeWidth="6" />
        <path d="M296 55l70 35 80-20M366 90v100M376 98l44-12v54l-44 12zM352 62l34-9 28 14-34 9zM300 145l50-20M305 110l50 65M322 155c5 20 18 28 20 40" strokeWidth="4" />
        <path d="M298 55v142M366 90v90M358 88v100M446 70v82" strokeWidth="7" />
      </g>
      {/* podium */}
      <path d="M38 782l392 232 5 250L35 1035z" fill={DARK} strokeWidth="8" />
      <path d="M188 862l98-26 12 92-14-6z" fill={PINK} strokeWidth="4" />
      <path d="M395 992l130-32v32l-92 22z" fill={PINK} strokeWidth="4" />
      <path d="M36 872l400 222M36 962l400 222" strokeWidth="5" />
      <path d="M84 808v252M134 838v254M182 866v256M208 882v256M274 920v258M305 938v260M346 962v260M390 988v262" strokeWidth="9" />
      <path d="M80 810v245M138 842v246M190 870v254M202 878v254M280 924v252M298 934v252M353 966v254M386 986v254" stroke="#ef7f8a" strokeWidth="3" />
      {[[56, 805], [102, 830], [148, 858], [218, 898], [245, 915], [314, 954], [362, 980], [408, 1008]].map(([x, y], i) => (
        <path key={x} d={`M${x} ${y}l18 5v20l-18-6z`} fill={i ? '#dd6c70' : '#f0f2d8'} stroke="#5c501c" strokeWidth="4" />
      ))}
      <path d="M435 1014l93-26 82-18 138-30v250l-313 72z" fill={PINK} stroke="none" />
      <path d="M435 1014l93-26M435 1020l93-24M435 1088l90-22 85-18M435 1098l90-22 85-18 140-34M435 1182l90-20M435 1190l416-92M435 1260l415-92M528 1070l222-52" strokeWidth="4" />
      <path d="M528 990l222-52M528 980l222-52" strokeWidth="3" />
      <path d="M450 1030l70 40M450 1068l70-30M480 1005v70M508 1000v66M450 1100l70 50M450 1150l70-24M480 1095v70M508 1090v70M456 1128l60-16M450 1168l70-4" strokeWidth="4" />
      <path d="M432 1014v250M442 1014v246M526 990v248M536 990v244M609 960v258M620 960v255M660 950v255M672 945v258M750 930v254M848 996v172" strokeWidth="5" />
      <path d="M622 1000l38 16M622 1040l38-12M640 980v56M622 1080l38-8M640 1055v74M625 1130l33-12M622 1095l36 22" strokeWidth="4" />
      <path d="M750 940l98 54-98 24z" fill={PINK} />
      <path d="M762 1024l66-17v90l-66 12z" fill="#dde7f7" />
      <path d="M762 1082l32-6v26l-32 6z" fill={DARK} stroke="none" />
      <path d="M795 1016v86M762 1050l30 20M752 1028l96-24M752 1110l98-22" />
      <path d="M842 1000v165" strokeWidth="6" />
      <path d="M546 1112l45-10v40l-45 12z" fill="#ef7480" stroke="#55501a" strokeWidth="6" />
      <path d="M550 1120l38 16M560 1112l26 18M552 1138l36-18" strokeWidth="3" />
      {/* supports */}
      <path d="M30 1033l405 230v22L30 1050z" fill="#16508c" stroke="#0d3f78" strokeWidth="4" />
      <path d="M435 1266l417-96v16l-417 96z" fill="#78b4f0" stroke="#17467c" strokeWidth="3" />
      {Array.from({ length: 34 }, (_, i) => (
        <path key={i} d={`M${442 + i * 12} ${1265 - i * 2.76}v16`} stroke="#17467c" strokeWidth="3" />
      ))}
    </svg>
  );
};

const ViewCube = () => (
  <svg viewBox="0 0 84 80" className="absolute top-[17px] right-2 h-20 w-[84px]" stroke="#8b8d92" strokeDasharray="9 3">
    <ellipse cx="42" cy="62" rx="36" ry="9" fill="#d3d7df" stroke="none" />
    <path d="M12 11l40-7 25 9-41 9z" fill="#f0f1f4" />
    <path d="M12 11l24 11v48L14 57z" fill="#dfe1e6" />
    <path d="M36 22l41-9-3 44-38 13z" fill="#e8eaef" />
    <path d="M34 8c8 0 8 5 20 6M46 7l10-1" fill="none" strokeDasharray="none" strokeWidth="2" />
    <g fontFamily="Open Sans, sans-serif" fontWeight="700" stroke="none" fill="#8b8d92">
      <text x="41" y="49" fontSize="9" transform="rotate(-9 41 49)">DROITE</text>
      <text x="14" y="37" fontSize="6" transform="rotate(24 14 37)">AVANT</text>
    </g>
  </svg>
);

const displayArt = [
  <><text x="1" y="9" fontSize="10" fill="#2d84c4" stroke="none">n</text><path d="M5 12l4-3M11 8h6" strokeWidth="1.6" /></>,
  <><text x="7" y="10" fontSize="10" fill="#2d84c4" stroke="none">n</text><path d="M2 12h4M15 12h3" strokeWidth="1.6" /></>,
  <><text x="2" y="7" fontSize="7" fill="#2d84c4" stroke="none">N12</text><path d="M3 12l4-4h11l-4 4z" fill="#e9df2a" strokeWidth="1.4" /></>,
  <><path d="M5 8c1-6 9-6 10 0zM3 9h14" fill="#f0e43c" /><path d="M6 10l-2 3M9 10l-2 3M12 10l-2 3M15 10l-2 3" /></>,
  <path d="M6 2v7l4 3 7-5-4-1-4 2z" fill="#f0e43c" stroke="#a99d18" />,
  <path d="M9 2v7h8M9 7h8M9 9l-6 3M3 10h5" stroke="#77743c" strokeWidth="1.4" />,
  <path d="M3 11l5-6h10l-5 6z" fill="#f0e43c" strokeWidth="1.4" />,
  <><path d="M2 5h16v6H2z" fill="#fbf7a0" stroke="none" /><path d="M2 12h16" stroke="#776" strokeDasharray="2 1" /></>,
  <><text x="3" y="7" fontSize="7" fill="#2d84c4" stroke="none">123</text><path d="M3 8h14v4H3z" fill="#fbf7a0" stroke="none" /><path d="M3 12h14" stroke="#776" /></>,
  <><path d="M2 2h5v4H2zM11 8h6v5h-6z" fill="#e9df2a" strokeWidth="2" /><path d="M10 3h5v3M4 9v4h4" stroke="#2d84c4" strokeWidth="1.5" /></>,
];

const Viewport = () => (
  <main className="flex min-w-0 flex-1 flex-col">
    <div className="flex min-h-0 flex-1">
      <div className="relative min-w-0 flex-1 overflow-hidden border border-t-[#666] border-r-black border-b-black border-l-[#888] bg-linear-to-b from-[#f2f2f2] via-[#e0e6f1] to-[#cddefb]">
        <Tower />
        <ViewCube />
        <ul className="absolute top-[130px] right-[47px] font-['Liberation_Sans',sans-serif] text-[14px] leading-[17px] text-[#cf1038]">
          {legend.map((item, i) => (
            <li key={i} className="flex items-center gap-1">
              <i className="h-[3px] w-[42px]" style={{ backgroundColor: item.color }} />
              {item.name}
            </li>
          ))}
        </ul>
        <svg viewBox="0 0 18 20" className="absolute top-[398px] left-[548px] h-5 w-[18px]" fill="#fff" stroke="#222">
          <path d="M1 11V3h2l2 6 9-8 2 1-1 2-6 6 5-4 2 2-2 2 1 2-1 4-4 3H6l-4-3z" />
          <path d="M9 11l2 2M11 9l3 3" fill="none" />
        </svg>
        <svg viewBox="0 0 78 78" className="absolute bottom-px left-[3px] h-[78px] w-[78px] border-t border-r-2 border-b-2 border-l border-t-white border-r-black border-b-black border-l-white">
          <path d="M29 49V34" stroke="#d91f3a" strokeWidth="4" />
          <path d="M24 35l5-11 5 11z" fill="#d91f3a" />
          <path d="M29 49l15-4" stroke="#2d9b3c" strokeWidth="4" />
          <path d="M42 40l12 3-10 5z" fill="#2d9b3c" />
          <path d="M29 49l9 5" stroke="#2020c0" strokeWidth="3" />
          <path d="M38 51l6 7-9-1z" fill="#2020c0" />
          <g fontFamily="Liberation Sans, sans-serif" fontSize="13" stroke="none">
            <text x="27" y="22" fill="#d91f3a">Z</text>
            <text x="54" y="43" fill="#2d9b3c" fontWeight="700">Y</text>
            <text x="45" y="59" fill="#2020c0" fontWeight="700">X</text>
          </g>
        </svg>
        <div className="absolute bottom-0 left-[260px] flex gap-1 font-['Liberation_Sans',sans-serif] text-[12px] leading-[15px] text-white">
          <button className="w-[73px] rounded-t-sm bg-linear-to-b from-[#949698] to-[#5f6466] font-bold">3D</button>
          <button className="flex w-[278px] items-center rounded-t-sm bg-linear-to-b from-[#949698] to-[#5f6466] px-2">
            <span className="flex-1 text-left">
              <b>Z = 0.00 m</b> - <em>Etage 1</em>
            </span>
            <span className="flex gap-3"><Arrow dir="up" color="#8a8e92" /><Arrow dir="down" color="#8a8e92" /></span>
          </button>
        </div>
        <div className="absolute right-0.5 bottom-0.5 h-[13px] w-[102px] bg-[#a5b5cf] text-center font-['Liberation_Sans',sans-serif] text-[10px] leading-[13px] text-[#bac8de]">Vue</div>
      </div>
      <div className="flex w-[17px] flex-col items-center bg-[#f0f0f0] py-1.5">
        <Arrow dir="up" />
        <div className="flex-1" />
        <div className={`${thumb} h-[118px] w-[13px]`}><Grip /></div>
        <div className="flex-1" />
        <Arrow dir="down" />
      </div>
    </div>
    <div className="flex h-[18px] items-center bg-[#f0efef] pl-0.5">
      <div className="flex gap-0.5">
        {displayArt.map((art, i) => (
          <button key={i} aria-label={`Attribut ${i + 1}`} className="h-[14px] w-5 rounded-sm border border-[#6f8297] bg-white">
            <svg viewBox="0 0 20 14" className="block h-3 w-[18px] overflow-visible" fill="none" stroke="#111" fontFamily="Liberation Sans, sans-serif">{art}</svg>
          </button>
        ))}
      </div>
      <div className="ml-2 flex min-w-0 flex-1 items-center">
        <Arrow dir="left" />
        <div className="flex-1" />
        <div className="flex h-[14px] w-[274px] items-center justify-center border border-[#999] bg-linear-to-b from-[#f0f0f0] to-[#c8c8cc]"><Grip vertical /></div>
        <div className="flex-1" />
        <Arrow dir="right" />
      </div>
      <div className="mr-[18px] ml-3 flex gap-0.5">
        {[
          <path key="x" d="M2 1l16 12M18 1L2 13M3 8h14M13 5v5" stroke="#8c1c2c" strokeWidth="1.4" />,
          <path key="g" d="M2 6h7M10 6h7c0 6-6 5-7 0z" stroke="#3a6884" strokeWidth="1.6" />,
          <g key="e"><path d="M2 8c4-7 12-7 16 0" stroke="#1c5c94" strokeWidth="2" /><circle cx="10" cy="8" r="3.5" fill="#43a7d8" /></g>,
        ].map((art, i) => (
          <button key={i} aria-label={`Vue ${i + 1}`} className="h-[14px] w-5 rounded-sm border border-[#6f8297] bg-white">
            <svg viewBox="0 0 20 14" className="block h-3 w-[18px]" fill="none" stroke="#111">{art}</svg>
          </button>
        ))}
      </div>
    </div>
  </main>
);

const RightTools = () => (
  <aside className="flex w-[30px] shrink-0 flex-col gap-[13px] border-l border-[#d8d8d8] bg-[#f1f1f1] pt-[10px] pl-1">
    {rightTools.map((group, i) => (
      <div key={i} className="flex flex-col gap-[5px]">
        {group.map((t) => <ToolButton key={t.label} tool={t} />)}
      </div>
    ))}
  </aside>
);

const StatusBar = () => (
  <footer className="font-['Roboto',sans-serif] text-[11px] text-black">
    <div className="flex h-5 items-center border-t border-[#aaa] bg-[#f0eeee] font-['Liberation_Sans',sans-serif] text-[10px]">
      <button className="h-4 w-9 bg-white pl-1 text-left leading-[15px]">Vue</button>
      <button className="h-4 w-[77px] border-r border-b border-[#aaa] pl-1 text-left leading-[15px]">Chargements</button>
      <button className="h-4 w-[86px] border-r border-b border-[#aaa] pl-1 text-left leading-[15px]">Chargements:1</button>
    </div>
    <div className="flex h-[18px] items-center border-t border-[#bbb] bg-[#f1efef] leading-4">
      <div className="flex w-[420px] gap-[5px] pl-1">
        {[
          'M2 4h6M12 6h8M16 2v8M3 10v9M7 16l4 4M13 18h7M18 13v6',
          'M2 3l4 10 4-10M12 6c0-5 8-4 7 0 0 3-3 3-3 6M2 19h16',
          'M2 2h6v7H2zM13 2h6v7h-6zM2 13h6v7H2zM13 13h6v7h-6z',
          'M2 2l18 18M20 2L2 20M1 11h20M14 4h6',
          'M2 8h12v12H2zM2 8l6-6h12v12l-6 6M14 8l6-6M8 2v12h12M8 14l-6 6',
          'M2 8h12v12H2zM2 8l6-6h12v12l-6 6M14 8l6-6M4 12h8M4 16h8',
          'M2 8h12v12H2zM2 8l6-6h12v12l-6 6M14 8l6-6',
        ].map((d, i) => (
          <button key={d} aria-label={`Affichage ${i + 1}`}>
            <Ic size="h-[13px] w-[13px]"><path d={d} strokeWidth="1.8" stroke={i === 3 ? '#7a2860' : '#111'} /></Ic>
          </button>
        ))}
      </div>
      <span className="h-3 w-3 rounded-full border border-[#a39b22] bg-[#eee32c]" />
      <span className="ml-[5px] w-[185px]">Résultats MEF: non actuels</span>
      <span className="ml-10 w-[46px]">23066</span>
      <span className="border-b border-black text-[9px] leading-[9px]">A-1</span>
      <span className="flex-1" />
      <Ic size="h-3 w-3"><path d="M4 1v20M1 18h20M8 4h10v9" strokeWidth="1.8" /></Ic>
      <span className="ml-2 w-[166px]">x=11.90; y=0.00; z=2.04</span>
      <Ic size="h-3 w-3"><path d="M2 5h18M2 15h18M4 11v8M18 11v8" strokeWidth="2.2" /></Ic>
      <span className="ml-1 w-[76px]">0.00</span>
      <span className="pr-2.5">[m] [kN] [Deg]</span>
    </div>
    <div className="h-[3px] bg-linear-to-r from-[#4a3c36] via-[#8d7463] to-[#514238]" />
  </footer>
);

export default function App() {
  return (
    <div className="flex h-screen min-h-[720px] flex-col overflow-hidden border-y-[17px] border-black bg-[#f0f0f0]">
      <TitleBar />
      <Toolbars />
      <div className="flex min-h-0 flex-1">
        <LeftTools />
        <ObjectPanel />
        <Viewport />
        <RightTools />
      </div>
      <StatusBar />
    </div>
  );
}
